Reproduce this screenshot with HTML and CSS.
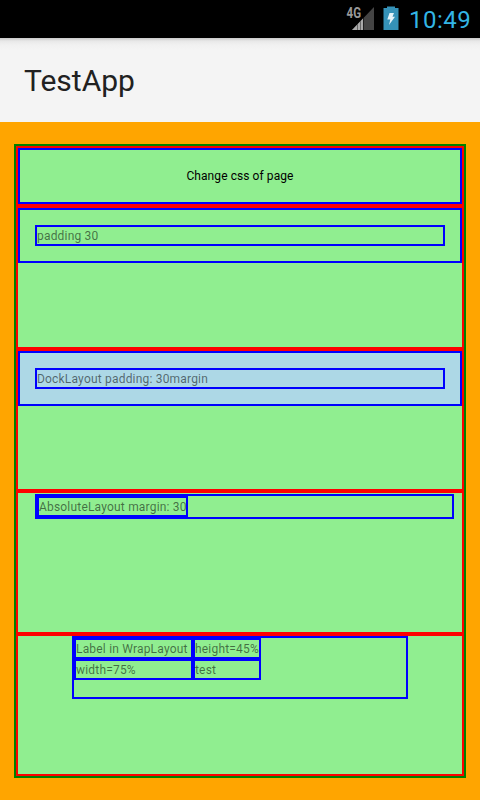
FILE: index.html
```html
<!DOCTYPE html>
<html lang="en">
<head>
<meta charset="utf-8">
<title>TestApp</title>
<link rel="stylesheet" href="styles.css">
</head>
<body>
<header class="status">
  <svg class="signal" width="28" height="26" viewBox="0 0 28 26">
    <path d="M27 1V24H5Z" fill="#444"/>
    <path d="M5 24L16 12.5V24Z" fill="#aaa"/>
    <path d="M10.5 18V24M13.5 15V24" stroke="#666" stroke-width="1"/>
    <path d="M16.5 12V24" stroke="#222" stroke-width="1"/>
    <text class="network" x="-.5" y="11.5" textLength="14.5" lengthAdjust="spacingAndGlyphs">4G</text>
  </svg>
  <svg class="battery" width="16" height="24" viewBox="0 0 16 24">
    <path d="M4 .5H12V2H15.5V24H.5V2H4Z" fill="#3592b8"/>
    <path d="M6.5 7H11L9.5 10.7H12L6 19L7.3 13.5H4.3Z" fill="#e4f3f9"/>
  </svg>
  <span class="clock">10:49</span>
</header>
<div class="action-bar"><h1 class="title">TestApp</h1></div>
<main class="page">
  <div class="grid">
    <section class="cell"><button class="box button">Change css of page</button></section>
    <section class="cell"><div class="box padded"><div class="box label">padding 30</div></div></section>
    <section class="cell"><div class="box padded dock"><div class="box label">DockLayout padding: 30margin</div></div></section>
    <section class="cell"><div class="box absolute-layout"><div class="box label">AbsoluteLayout margin: 30</div></div></section>
    <section class="cell"><div class="box wrap-layout">
      <div class="box label">Label in WrapLayout</div>
      <div class="box label">height=45%</div>
      <div class="box label">width=75%</div>
      <div class="box label">test</div>
    </div></section>
  </div>
</main>
</body>
</html>
```
FILE: styles.css
```css
* { box-sizing: border-box; }
body {
  margin: 0;
  height: 800px;
  display: flex;
  flex-direction: column;
  overflow: hidden;
  background: orange;
  font-family: Roboto, sans-serif;
}
.status {
  height: 38px;
  flex: none;
  display: flex;
  align-items: flex-start;
  background: #000;
  padding-left: 347px;
}
.signal { margin-top: 6px; overflow: visible; }
.network { font: bold 14.5px Roboto, sans-serif; fill: #999; }
.battery { margin: 6px 0 0 8px; }
.clock {
  margin: 5px 0 0 10px;
  font-size: 24px;
  line-height: 30px;
  letter-spacing: .5px;
  color: #33b5e5;
}
.action-bar {
  height: 84px;
  flex: none;
  padding-left: 24px;
  background: linear-gradient(#c8c8c8, #e8e8e8 3px, #f1f1f1 7px, #f4f4f4 12px);
}
.title {
  margin: 0;
  font-size: 30px;
  font-weight: 400;
  line-height: 86px;
  color: #212121;
}
.page { flex: 1; padding: 22px 14px; }
.grid {
  height: 634px;
  display: grid;
  grid-template-rows: 60px 143px 142px 143px 142px;
  border: 2px solid green;
  background: lightgreen;
}
.cell { border: 2px solid red; }
.box { border: 2px solid blue; }
.button {
  display: block;
  width: 100%;
  height: 56px;
  padding: 0;
  background: lightgreen;
  font: 12px Roboto, sans-serif;
  letter-spacing: .08px;
  color: #000;
}
.label {
  height: 21px;
  font-size: 12px;
  line-height: 19px;
  letter-spacing: .19px;
  white-space: nowrap;
  color: rgba(0, 0, 0, .54);
}
.padded { height: 55px; padding: 15px; }
.dock { background: lightblue; }
.absolute-layout {
  display: flex;
  height: 25px;
  margin: 1px 8px 0 17px;
}
.absolute-layout .label { width: 151px; }
.wrap-layout {
  display: grid;
  grid-template-columns: 119px 68px;
  align-content: start;
  width: 336px;
  height: 63px;
  margin-left: 54px;
}
```
